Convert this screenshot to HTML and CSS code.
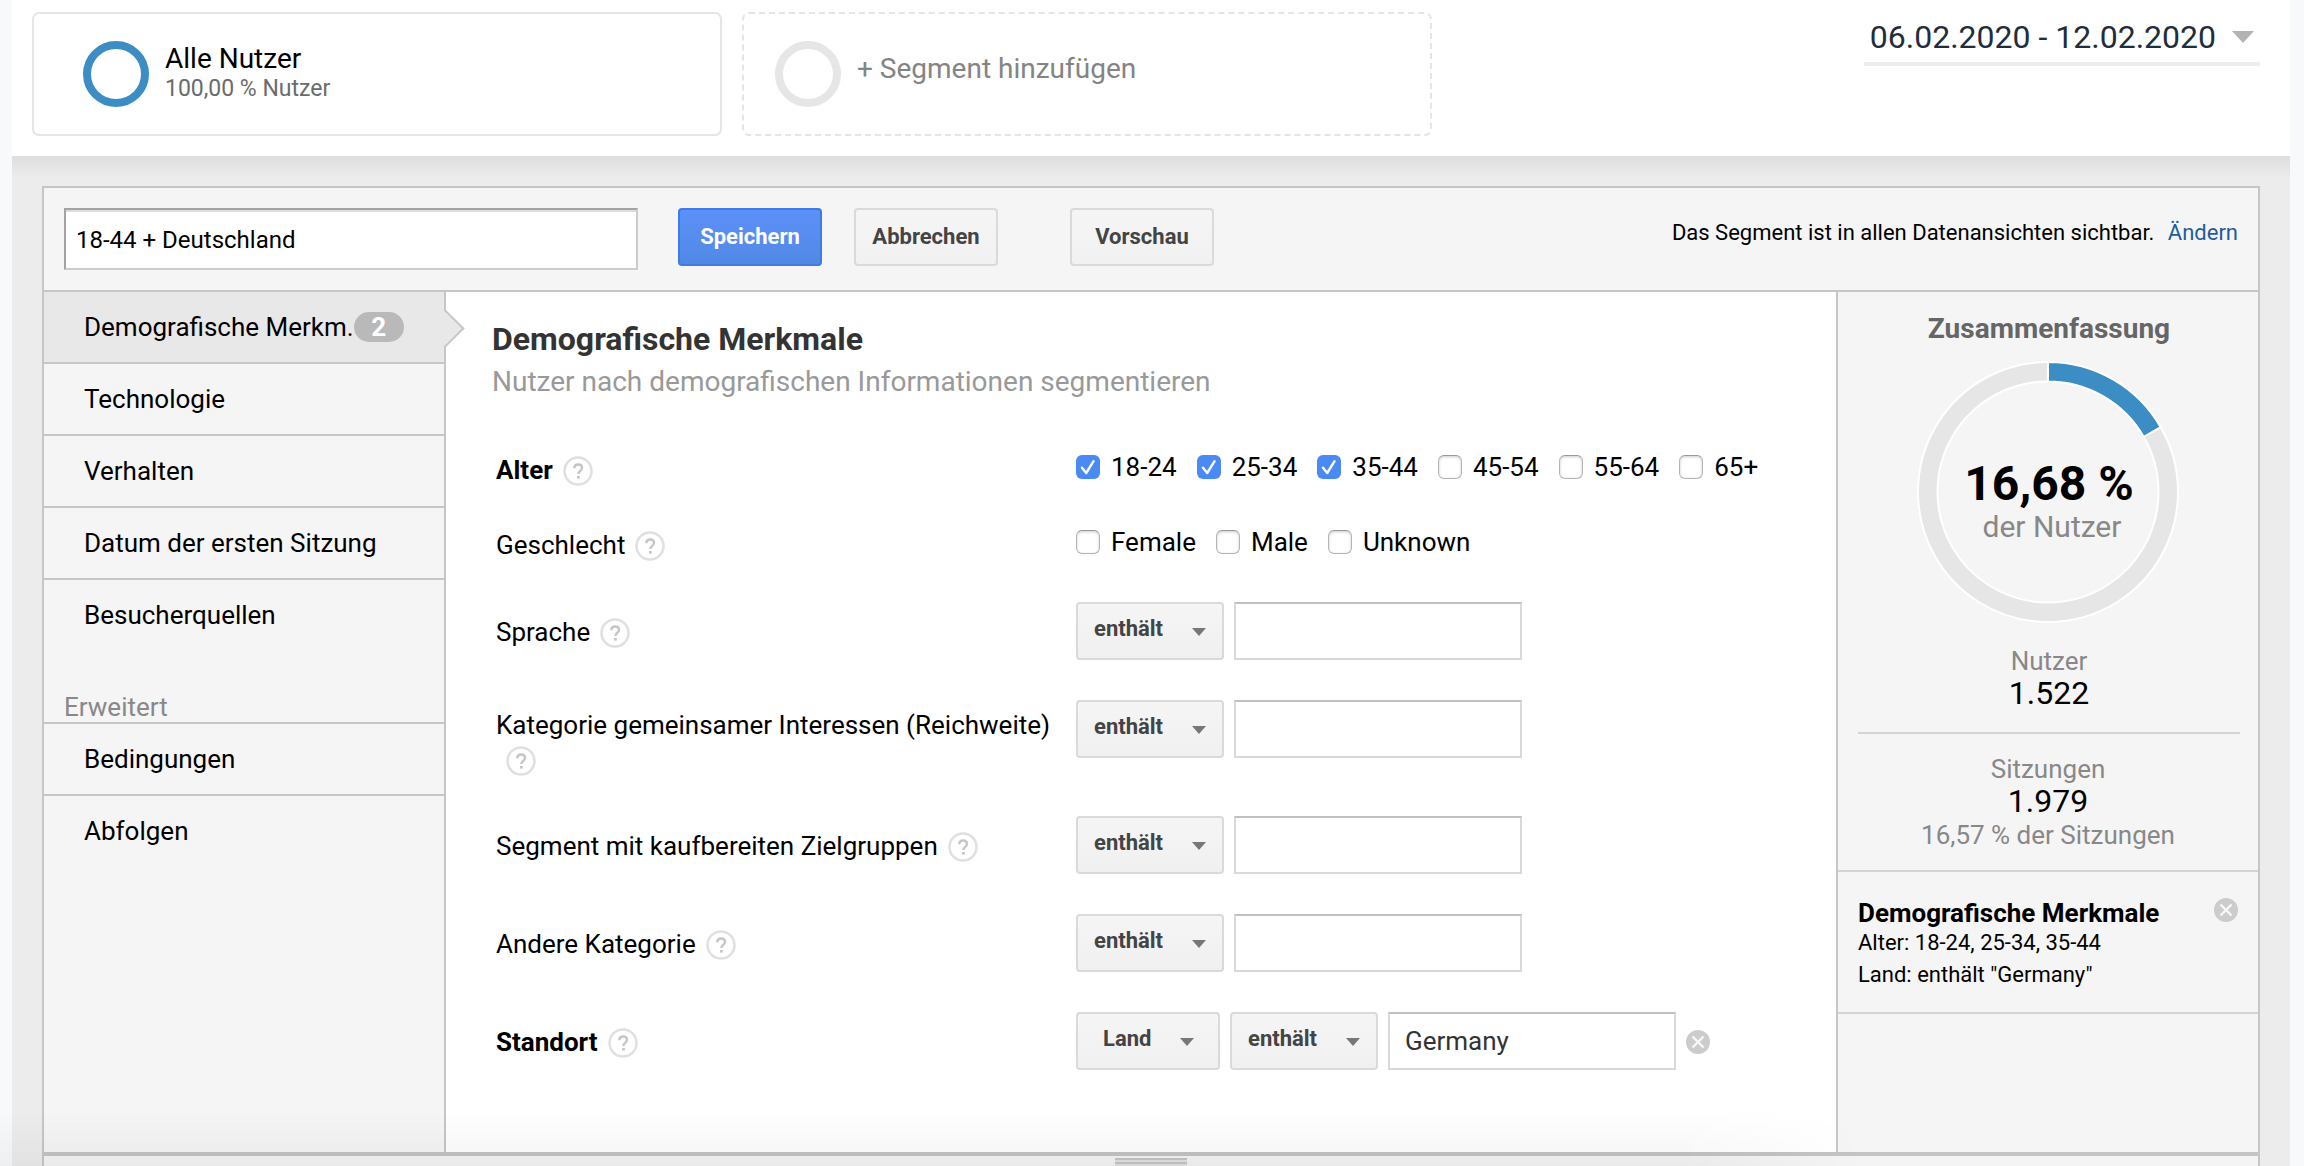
FILE: index.html
```html
<!DOCTYPE html>
<html lang="de">
<head>
<meta charset="utf-8">
<meta name="viewport" content="width=device-width, initial-scale=1">
<title>Segment bearbeiten</title>
<link rel="stylesheet" href="styles.css">
</head>
<body>
<svg class="sprite" aria-hidden="true">
  <symbol id="help" viewBox="0 0 30 30">
    <circle cx="15" cy="15" r="13.5" fill="#fff" stroke="#e0e0e0" stroke-width="2.5"/>
    <path d="M11.3 12.2c0-2.3 1.6-3.7 3.9-3.7s3.8 1.3 3.8 3.3c0 1.7-1 2.5-2.1 3.4-1 .8-1.5 1.3-1.5 2.8" fill="none" stroke="#c6c6c6" stroke-width="2.4"/>
    <rect x="14" y="20" width="2.8" height="2.6" fill="#c6c6c6"/>
  </symbol>
  <symbol id="remove" viewBox="0 0 24 24">
    <circle cx="12" cy="12" r="12" fill="#ccc"/>
    <path d="M6.5 6.5l11 11M17.5 6.5l-11 11" stroke="#f8f8f8" stroke-width="2.4" fill="none"/>
  </symbol>
</svg>
<div class="page">
  <header class="top">
    <div class="segments">
      <button type="button" class="segment">
        <span class="ring ring-blue"></span>
        <span class="segment-text"><span class="segment-name">Alle Nutzer</span><span class="segment-share">100,00 % Nutzer</span></span>
      </button>
      <button type="button" class="segment segment-add">
        <span class="ring"></span>
        <span class="segment-label">+ Segment hinzufügen</span>
      </button>
    </div>
    <button type="button" class="date">06.02.2020 - 12.02.2020<span class="date-arrow"></span></button>
  </header>

  <main class="stage">
    <section class="editor">
      <div class="toolbar">
        <input class="name" type="text" value="18-44 + Deutschland" aria-label="Segmentname">
        <button type="button" class="btn btn-primary">Speichern</button>
        <button type="button" class="btn">Abbrechen</button>
        <button type="button" class="btn btn-preview">Vorschau</button>
        <p class="visibility">Das Segment ist in allen Datenansichten sichtbar. <a href="#">Ändern</a></p>
      </div>

      <div class="columns">
        <nav class="nav">
          <a href="#" class="nav-item active">Demografische Merkm.<span class="badge">2</span></a>
          <a href="#" class="nav-item">Technologie</a>
          <a href="#" class="nav-item">Verhalten</a>
          <a href="#" class="nav-item">Datum der ersten Sitzung</a>
          <a href="#" class="nav-item last">Besucherquellen</a>
          <h2 class="nav-head">Erweitert</h2>
          <a href="#" class="nav-item">Bedingungen</a>
          <a href="#" class="nav-item last">Abfolgen</a>
        </nav>

        <form class="form">
          <h1 class="title">Demografische Merkmale</h1>
          <p class="subtitle">Nutzer nach demografischen Informationen segmentieren</p>

          <div class="fields">
            <div class="row row-checks">
              <div class="label strong">Alter<svg class="help"><use href="#help"/></svg></div>
              <div class="checks">
                <label><input type="checkbox" checked>18-24</label>
                <label><input type="checkbox" checked>25-34</label>
                <label><input type="checkbox" checked>35-44</label>
                <label><input type="checkbox">45-54</label>
                <label><input type="checkbox">55-64</label>
                <label><input type="checkbox">65+</label>
              </div>
            </div>
            <div class="row row-checks">
              <div class="label">Geschlecht<svg class="help"><use href="#help"/></svg></div>
              <div class="checks">
                <label><input type="checkbox">Female</label>
                <label><input type="checkbox">Male</label>
                <label><input type="checkbox">Unknown</label>
              </div>
            </div>
            <div class="row">
              <label class="label" for="f1">Sprache<svg class="help"><use href="#help"/></svg></label>
              <div class="controls">
                <span class="pick"><select aria-label="Operator Sprache"><option>enthält</option></select></span>
                <input class="text" id="f1" type="text">
              </div>
            </div>
            <div class="row row-tall">
              <label class="label" for="f2">Kategorie gemeinsamer Interessen (Reichweite)<svg class="help"><use href="#help"/></svg></label>
              <div class="controls">
                <span class="pick"><select aria-label="Operator Kategorie gemeinsamer Interessen"><option>enthält</option></select></span>
                <input class="text" id="f2" type="text">
              </div>
            </div>
            <div class="row">
              <label class="label" for="f3">Segment mit kaufbereiten Zielgruppen<svg class="help"><use href="#help"/></svg></label>
              <div class="controls">
                <span class="pick"><select aria-label="Operator Segment mit kaufbereiten Zielgruppen"><option>enthält</option></select></span>
                <input class="text" id="f3" type="text">
              </div>
            </div>
            <div class="row">
              <label class="label" for="f4">Andere Kategorie<svg class="help"><use href="#help"/></svg></label>
              <div class="controls">
                <span class="pick"><select aria-label="Operator Andere Kategorie"><option>enthält</option></select></span>
                <input class="text" id="f4" type="text">
              </div>
            </div>
            <div class="row">
              <label class="label strong" for="f5">Standort<svg class="help"><use href="#help"/></svg></label>
              <div class="controls">
                <span class="pick pick-place"><select aria-label="Ortstyp"><option>Land</option></select></span>
                <span class="pick"><select aria-label="Operator Standort"><option>enthält</option></select></span>
                <input class="text" id="f5" type="text" value="Germany">
                <button type="button" class="remove" aria-label="Entfernen"><svg><use href="#remove"/></svg></button>
              </div>
            </div>
          </div>
        </form>

        <aside class="summary">
          <h2 class="summary-title">Zusammenfassung</h2>
          <div class="donut">
            <svg viewBox="0 0 262 262" aria-hidden="true">
              <path d="M131 1A130 130 0 1 1 130.99 1ZM131 20.5A110.5 110.5 0 1 0 131.01 20.5Z" fill="#e6e6e6" fill-rule="evenodd" stroke="#fff" stroke-width="2"/>
              <path d="M131 1A130 130 0 0 1 243.7 66.2L226.8 75.9A110.5 110.5 0 0 0 131 20.5Z" fill="#3b8dc4" stroke="#fff" stroke-width="2"/>
            </svg>
            <div class="donut-text"><strong>16,68 %</strong><span>der Nutzer</span></div>
          </div>
          <div class="stat"><span>Nutzer</span><b>1.522</b></div>
          <div class="stat stat-sessions"><span>Sitzungen</span><b>1.979</b><span>16,57 % der Sitzungen</span></div>
          <div class="rule">
            <div class="rule-text">
              <h3>Demografische Merkmale</h3>
              <p>Alter: 18-24, 25-34, 35-44</p>
              <p>Land: enthält "Germany"</p>
            </div>
            <button type="button" class="remove" aria-label="Entfernen"><svg><use href="#remove"/></svg></button>
          </div>
        </aside>
      </div>
      <div class="resize"><span class="grip"></span></div>
    </section>
  </main>
</div>
</body>
</html>
```

FILE: styles.css
```css
* { box-sizing: border-box; }

body {
  margin: 0;
  background: #f8f9fb;
  color: #000;
  font: 26px/30px Roboto, "Liberation Sans", sans-serif;
}

/* soft shade along the lower window edge, fading out to the right */
body::after {
  content: "";
  position: fixed;
  bottom: 0;
  left: 0;
  width: 81%;
  height: 56px;
  background: linear-gradient(transparent, rgba(0, 0, 0, 0.04));
  mask-image: linear-gradient(to right, #000 90%, transparent);
  pointer-events: none;
}

h1, h2, h3, p { margin: 0; }
button, input, select { font: inherit; color: inherit; }
button { cursor: pointer; }
a { text-decoration: none; color: #1f5c9e; }

.sprite { display: none; }

.page {
  display: flex;
  flex-direction: column;
  height: 100vh;
  margin: 0 14px 0 12px;
  overflow: hidden;
  background: #fff;
}

/* header with the segment cards and the date range */
.top {
  display: flex;
  justify-content: space-between;
  align-items: flex-start;
  padding: 12px 30px 20px 20px;
}

.segments {
  display: grid;
  grid-template-columns: 1fr 1fr;
  gap: 20px;
  flex: 0 1 1400px;
}

.segment {
  display: flex;
  align-items: flex-start;
  gap: 16px;
  height: 124px;
  padding: 27px 49px;
  border: 2px solid #e5e5e5;
  border-radius: 7px;
  background: none;
  text-align: left;
}

.segment-add {
  padding-left: 31px;
  border-style: dashed;
  color: #848484;
}

.ring {
  flex: none;
  width: 66px;
  height: 66px;
  border: 8px solid #e6e6e6;
  border-radius: 50%;
}

.ring-blue { border-color: #3b8dc4; }

.segment-text { display: flex; flex-direction: column; }
.segment-name { font-size: 28px; line-height: 36px; }
.segment-share { font-size: 23px; line-height: 24px; color: #6b6b6b; }
.segment-label { font-size: 28px; line-height: 56px; }

.date {
  display: flex;
  align-items: center;
  gap: 16px;
  height: 54px;
  padding: 0 6px;
  border: 0;
  border-bottom: 4px solid #eee;
  background: none;
  color: #1f2d3d;
  font-size: 32px;
}

.date-arrow {
  border: 11px solid transparent;
  border-top: 12px solid #b3b3b3;
  border-bottom: 0;
}

/* grey stage round the editor */
.stage {
  flex: 1;
  display: flex;
  min-height: 0;
  padding: 30px 30px 0;
  background: linear-gradient(#dedede, #ececec 22px);
}

.editor {
  flex: 1;
  display: flex;
  flex-direction: column;
  min-width: 0;
  border: 2px solid #c6c6c6;
  border-bottom: 0;
  background: #f5f5f5;
}

.toolbar {
  display: flex;
  align-items: flex-start;
  height: 104px;
  padding: 20px;
  border-bottom: 2px solid #c6c6c6;
}

.name {
  width: 574px;
  height: 62px;
  margin-right: 40px;
  padding: 2px 10px 0;
  border: 2px solid #ccc;
  border-top-color: #a3a3a3;
  border-left-color: #a3a3a3;
  background: #fff;
  box-shadow: inset 0 2px #ddd;
  font-size: 24px;
}

.btn {
  min-width: 144px;
  height: 58px;
  margin-right: 32px;
  padding: 0;
  border: 2px solid #dadada;
  border-radius: 4px;
  background: linear-gradient(#f5f5f5, #f1f1f1);
  color: #444;
  font-size: 22px;
  font-weight: 700;
}

.btn-primary {
  border-color: #3f7ae6;
  background: linear-gradient(#5b91f8, #5288e4);
  color: #fff;
}

.btn-preview { margin-left: 40px; }

.visibility {
  margin-left: auto;
  font-size: 22px;
  line-height: 50px;
}

.visibility a { margin-left: 8px; }

.columns {
  flex: 1;
  display: grid;
  grid-template-columns: 402px 1fr 422px;
  min-height: 0;
}

/* left navigation */
.nav { border-right: 2px solid #c6c6c6; }

.nav-item {
  position: relative;
  display: flex;
  align-items: center;
  height: 72px;
  padding: 0 40px;
  border-bottom: 2px solid #c6c6c6;
  color: #000;
}

.nav-item.last { border-color: transparent; }
.nav-item.active { background: #e8e8e8; }

/* pointer from the chosen entry into the form */
.nav-item.active::after {
  content: "";
  position: absolute;
  top: 23px;
  right: -15px;
  width: 25px;
  height: 25px;
  border: solid #c6c6c6;
  border-width: 2px 2px 0 0;
  background: linear-gradient(45deg, transparent 42%, #e8e8e8 42%);
  transform: rotate(45deg);
}

.badge {
  width: 50px;
  border-radius: 15px;
  background: #b9b9b9;
  color: #fff;
  font-weight: 700;
  text-align: center;
}

.nav-head {
  height: 72px;
  padding: 40px 20px 0;
  border-bottom: 2px solid #c6c6c6;
  color: #888;
  font-size: 26px;
  font-weight: 400;
}

/* form */
.form {
  padding: 28px 46px 0;
  background: #fff;
}

.title {
  color: #333;
  font-size: 32px;
  font-weight: 700;
  line-height: 38px;
}

.subtitle {
  color: #999;
  font-size: 28px;
  line-height: 48px;
}

.fields { padding: 46px 4px 0; }

.row {
  display: grid;
  grid-template-columns: 580px 1fr;
  height: 98px;
}

.row-checks { height: 75px; }
.row-tall { height: 116px; }

.row .label { padding-top: 12px; line-height: 36px; }
.row-tall .label { padding-top: 8px; line-height: 35px; }
.row-checks .label { padding-top: 0; }

.strong { font-weight: 700; }

.help {
  width: 30px;
  height: 30px;
  margin-left: 10px;
  vertical-align: -7px;
}

.checks { display: flex; gap: 20px; }

.checks label {
  display: flex;
  align-items: center;
  gap: 11px;
  height: 30px;
}

.checks input {
  appearance: none;
  width: 24px;
  height: 24px;
  margin: 0;
  border: 1px solid #b4b4b4;
  border-top-color: #999;
  border-radius: 6px;
  background: #fff;
  box-shadow: inset 0 1px 3px rgba(0, 0, 0, 0.2);
}

.checks input:checked {
  border: 0;
  background: #4a8af5 url("data:image/svg+xml,%3Csvg xmlns='http://www.w3.org/2000/svg' viewBox='0 0 24 24'%3E%3Cpath d='M6 12.800L10.200 18L17.600 6.200' fill='none' stroke='white' stroke-width='2.400' stroke-linecap='round' stroke-linejoin='round'/%3E%3C/svg%3E");
  box-shadow: none;
}

.controls { display: flex; gap: 10px; }

.pick { position: relative; width: 148px; }
.pick-place { width: 144px; }

.pick select {
  appearance: none;
  width: 100%;
  height: 58px;
  padding: 0 16px 5px;
  border: 2px solid #dadada;
  border-radius: 4px;
  background: linear-gradient(#f5f5f5, #f0f0f0);
  color: #444;
  font-size: 22px;
  font-weight: 700;
}

.pick-place select { padding-left: 25px; }

.pick::after {
  content: "";
  position: absolute;
  top: 26px;
  right: 18px;
  border: 7px solid transparent;
  border-top: 8px solid #777;
  border-bottom: 0;
  pointer-events: none;
}

.pick-place::after { right: 26px; }

.text {
  width: 288px;
  height: 58px;
  padding: 0 15px;
  border: 2px solid #d9d9d9;
  border-top-color: #c0c0c0;
  background: #fff;
  color: #333;
}

.remove {
  width: 24px;
  height: 24px;
  padding: 0;
  border: 0;
  background: none;
}

.remove svg { display: block; width: 24px; height: 24px; }
.controls .remove { margin-top: 18px; }

/* summary */
.summary {
  border-left: 2px solid #c6c6c6;
  text-align: center;
}

.summary-title {
  padding: 20px 0 0 2px;
  color: #666;
  font-size: 28px;
  font-weight: 700;
  line-height: 34px;
}

.donut {
  display: grid;
  width: 262px;
  margin: 15px auto 0;
}

.donut svg, .donut-text { grid-area: 1 / 1; }
.donut svg { width: 262px; height: 262px; }

.donut-text {
  display: flex;
  flex-direction: column;
  padding: 97px 0 0 2px;
}

.donut strong { font-size: 48px; line-height: 52px; }
.donut span { padding-left: 6px; color: #888; font-size: 30px; line-height: 34px; }

.stat {
  display: flex;
  flex-direction: column;
  height: 111px;
  margin: 0 18px 0 20px;
  padding-top: 23px;
  border-bottom: 2px solid #d4d4d4;
  color: #888;
}

.stat b {
  margin-bottom: 2px;
  color: #000;
  font-size: 32px;
  font-weight: 400;
  line-height: 34px;
}

.stat-sessions {
  height: 138px;
  margin: 0;
  padding-top: 20px;
}

.rule {
  display: flex;
  justify-content: space-between;
  height: 142px;
  padding: 26px 20px 0;
  border-bottom: 2px solid #d4d4d4;
  text-align: left;
}

.rule h3 { font-size: 26px; font-weight: 700; line-height: 30px; }
.rule p { font-size: 22px; line-height: 34px; }
.rule h3 + p { line-height: 30px; }

/* drag bar under the editor */
.resize {
  display: flex;
  justify-content: center;
  height: 14px;
  padding-top: 2px;
  border-top: 4px solid #c4c4c4;
  background: #f4f4f4;
}

.grip {
  width: 72px;
  background: repeating-linear-gradient(#c4c4c4 0 2px, #e2e2e2 2px 4px);
}
```
